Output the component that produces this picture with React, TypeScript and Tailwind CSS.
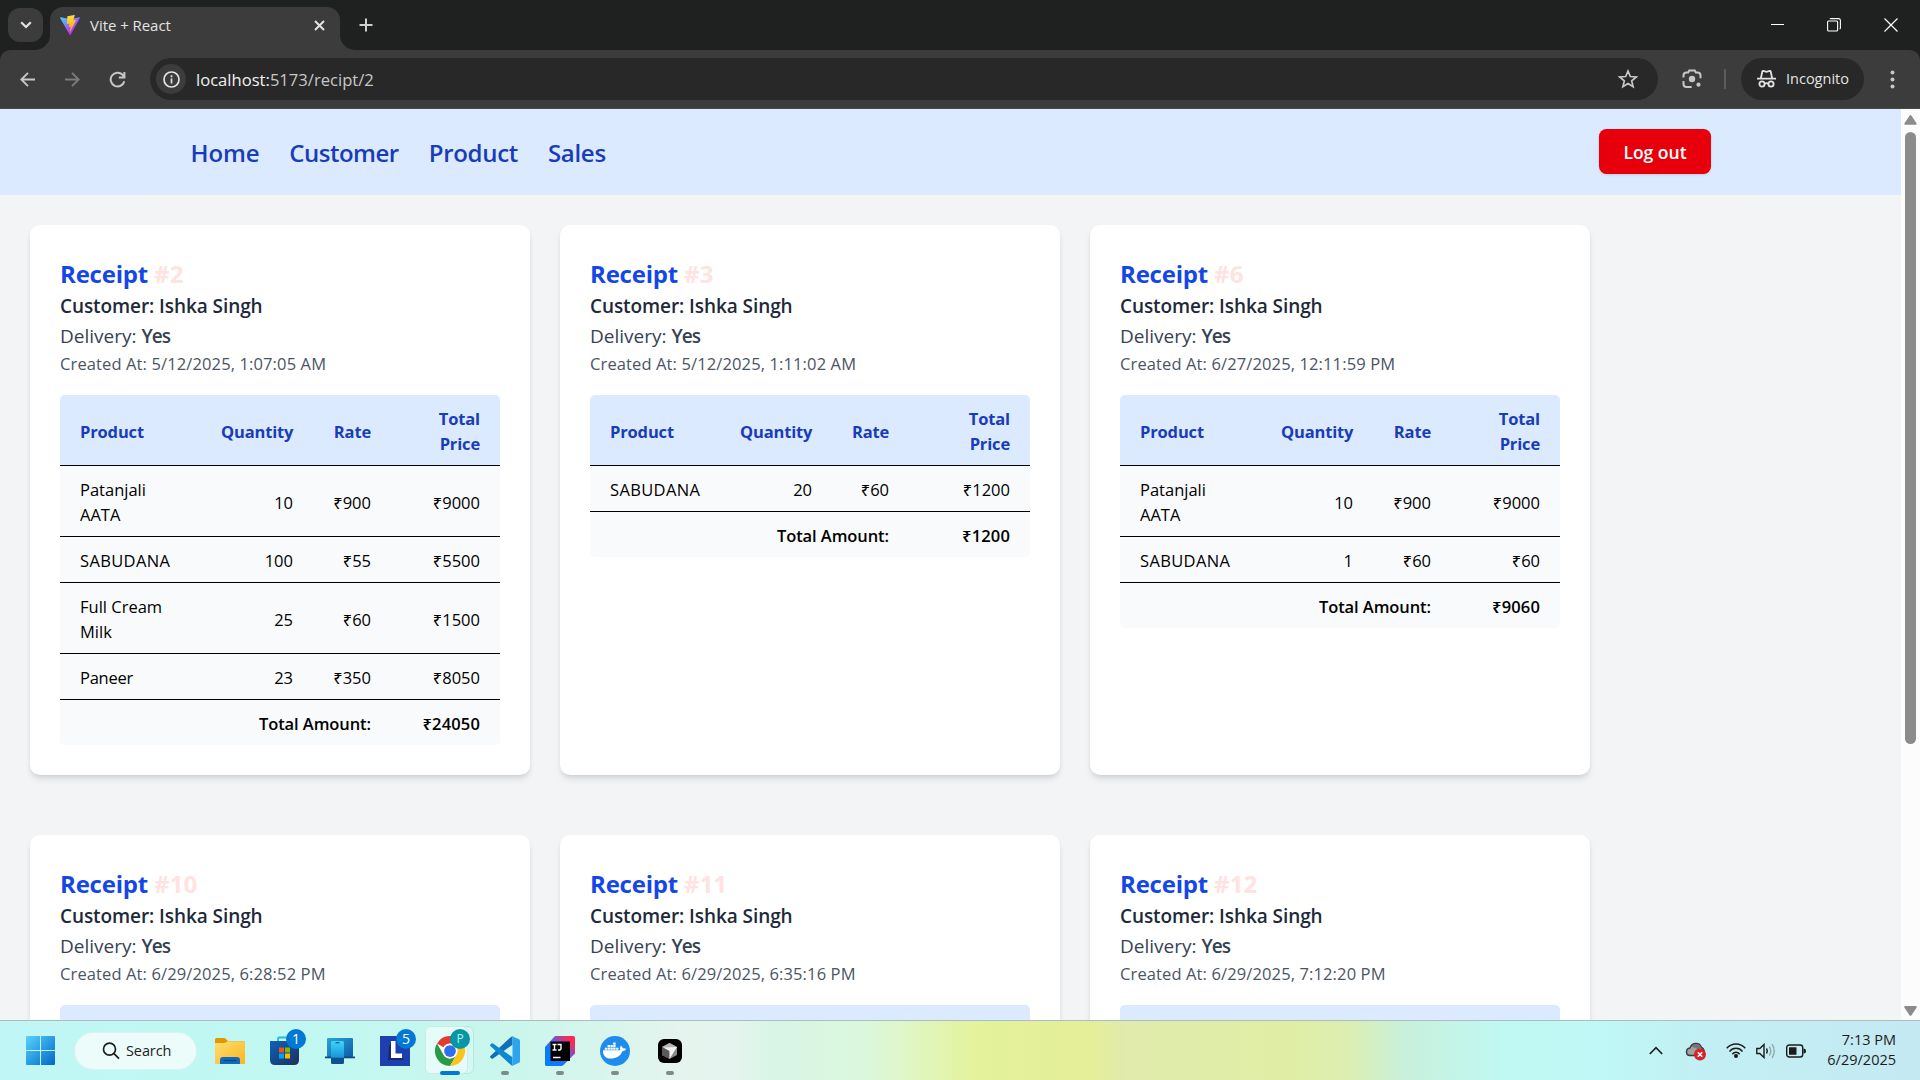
import React from "react";
import { FaDocker } from "react-icons/fa";

type Item = { name: React.ReactNode; qty: string; rate: string; total: string };
type Receipt = {
  id: number;
  created: string;
  items: Item[];
  total: string;
  cols: [string, string, string, string];
};

const COLS_A: [string, string, string, string] = ["w-[141px]", "w-[112px]", "w-[78px]", "w-[109px]"];
const COLS_B: [string, string, string, string] = ["w-[130px]", "w-[112px]", "w-[77px]", "w-[121px]"];

const aata = (
  <>
    Patanjali
    <br />
    AATA
  </>
);
const milk = (
  <>
    Full Cream
    <br />
    Milk
  </>
);
const sabudana = <span className="tracking-[0.35px]">SABUDANA</span>;

const receipts: Receipt[] = [
  {
    id: 2,
    created: "5/12/2025, 1:07:05 AM",
    items: [
      { name: aata, qty: "10", rate: "₹900", total: "₹9000" },
      { name: sabudana, qty: "100", rate: "₹55", total: "₹5500" },
      { name: milk, qty: "25", rate: "₹60", total: "₹1500" },
      { name: <span className="tracking-[-0.25px]">Paneer</span>, qty: "23", rate: "₹350", total: "₹8050" },
    ],
    total: "₹24050",
    cols: COLS_A,
  },
  {
    id: 3,
    created: "5/12/2025, 1:11:02 AM",
    items: [{ name: sabudana, qty: "20", rate: "₹60", total: "₹1200" }],
    total: "₹1200",
    cols: COLS_B,
  },
  {
    id: 6,
    created: "6/27/2025, 12:11:59 PM",
    items: [
      { name: aata, qty: "10", rate: "₹900", total: "₹9000" },
      { name: sabudana, qty: "1", rate: "₹60", total: "₹60" },
    ],
    total: "₹9060",
    cols: COLS_A,
  },
  { id: 10, created: "6/29/2025, 6:28:52 PM", items: [], total: "", cols: COLS_A },
  { id: 11, created: "6/29/2025, 6:35:16 PM", items: [], total: "", cols: COLS_A },
  { id: 12, created: "6/29/2025, 7:12:20 PM", items: [], total: "", cols: COLS_A },
];

function ViteLogo() {
  return (
    <svg width="20" height="20" viewBox="0 0 256 257">
      <defs>
        <linearGradient id="va" x1="0" x2="0.57" y1="0.08" y2="0.78">
          <stop offset="0" stopColor="#41D1FF" />
          <stop offset="1" stopColor="#BD34FE" />
        </linearGradient>
        <linearGradient id="vb" x1="0.43" x2="0.5" y1="0.02" y2="0.89">
          <stop offset="0" stopColor="#FFEA83" />
          <stop offset=".08" stopColor="#FFDD35" />
          <stop offset="1" stopColor="#FFA800" />
        </linearGradient>
      </defs>
      <path
        fill="url(#va)"
        d="M255.153 37.938 134.897 252.976c-2.483 4.44-8.862 4.466-11.382.048L.875 37.958c-2.746-4.814 1.371-10.646 6.827-9.67l120.385 21.517a6.537 6.537 0 0 0 2.322-.004l117.867-21.483c5.438-.991 9.574 4.796 6.877 9.62Z"
      />
      <path
        fill="url(#vb)"
        d="M185.432.063 96.44 17.501a3.268 3.268 0 0 0-2.634 3.014l-5.474 92.456a3.268 3.268 0 0 0 3.997 3.378l24.777-5.718c2.318-.535 4.413 1.507 3.936 3.838l-7.361 36.047c-.495 2.426 1.782 4.5 4.151 3.78l15.304-4.649c2.372-.72 4.652 1.36 4.15 3.788l-11.698 56.621c-.732 3.542 3.979 5.473 5.943 2.437l1.313-2.028 72.516-144.72c1.215-2.423-.88-5.186-3.54-4.672l-25.505 4.922c-2.396.462-4.435-1.77-3.759-4.114l16.646-57.705c.677-2.35-1.37-4.583-3.769-4.113Z"
      />
    </svg>
  );
}

function TabStrip() {
  return (
    <div className="flex h-[50px] bg-[#1f2120]">
      <div className="flex w-[50px] items-start justify-end pt-2 pr-[7px]">
        <div className="flex h-[34px] w-[35px] items-center justify-center rounded-xl bg-[#3c3c3c]">
          <svg width="12" height="8" viewBox="0 0 12 8" fill="none" stroke="#e3e3e3" strokeWidth="2.2">
            <path d="M1.2 1.2 6 6l4.8-4.8" />
          </svg>
        </div>
      </div>
      <div className="relative mt-[7px] flex h-[43px] w-[290px] items-start rounded-t-[13px] bg-[#3c3c3c]">
        <svg className="absolute bottom-0 -left-[15px]" width="15" height="15" fill="#3c3c3c">
          <path d="M15 0v15H0A15 15 0 0 0 15 0Z" />
        </svg>
        <svg className="absolute -right-[15px] bottom-0" width="15" height="15" fill="#3c3c3c">
          <path d="M0 0v15h15A15 15 0 0 1 0 0Z" />
        </svg>
        <div className="flex h-[36px] w-full items-center pl-[10px]">
          <ViteLogo />
          <span className="ml-[10px] text-[15px] leading-5 tracking-[-0.05px] text-[#e3e3e3]">Vite + React</span>
          <svg className="mr-[15px] ml-auto" width="11" height="11" viewBox="0 0 11 11" stroke="#e3e3e3" strokeWidth="2">
            <path d="m1 1 9 9M10 1l-9 9" />
          </svg>
        </div>
      </div>
      <svg className="mt-[18px] ml-[19px]" width="14" height="14" viewBox="0 0 14 14" stroke="#d0d0d0" strokeWidth="2">
        <path d="M7 .5v13M.5 7h13" />
      </svg>
      <div className="ml-auto flex h-[50px] items-center gap-[43px] pr-[22px]">
        <svg width="13" height="13" viewBox="0 0 13 13" stroke="#fff" strokeWidth="1">
          <path d="M0 5.5h13" />
        </svg>
        <svg width="14" height="14" viewBox="0 0 14 14" fill="none" stroke="#fff" strokeWidth="1.1">
          <rect x=".6" y="3" width="10" height="10" rx="1" />
          <path d="M3 1.2Q3.2.6 4 .6h7.5q1.900 0 1.900 1.900V10q0 .8-.8 1" />
        </svg>
        <svg width="14" height="14" viewBox="0 0 14 14" stroke="#fff" strokeWidth="1.2">
          <path d="m.5.5 13 13M13.5.5l-13 13" />
        </svg>
      </div>
    </div>
  );
}

function Toolbar() {
  return (
    <div className="bg-[#1f2120]">
      <div className="flex h-[59px] items-start rounded-t-[10px] border-b border-[#4a4a4a] bg-[#3c3c3c] pt-2">
        <div className="flex h-[42px] w-[150px] items-center pl-5">
          <svg width="15" height="15" viewBox="0 0 15 15" fill="none" stroke="#c7c7c7" strokeWidth="1.9">
            <path d="M15 7.5H1.5M8 .8 1.3 7.5 8 14.2" />
          </svg>
          <svg className="ml-[30px]" width="15" height="15" viewBox="0 0 15 15" fill="none" stroke="#7b7b7b" strokeWidth="1.9">
            <path d="M0 7.5h13.5M7 .8l6.7 6.7L7 14.2" />
          </svg>
          <svg className="ml-[29px]" width="17" height="17" viewBox="0 0 17 17" fill="none" stroke="#c7c7c7" strokeWidth="2">
            <path d="M15.3 10.2A6.900 6.900 0 1 1 13.600 3.800L15.300 5.800M15.400 1v5.500H9.800" />
          </svg>
        </div>
        <div className="flex h-[42px] w-[1508px] items-center rounded-full bg-[#282828] pr-[20px] pl-[6px]">
          <div className="flex h-[30px] w-[30px] items-center justify-center rounded-full bg-[#3c3c3c]">
            <svg width="17" height="17" viewBox="0 0 17 17" fill="none" stroke="#e3e3e3" strokeWidth="1.7">
              <circle cx="8.5" cy="8.5" r="7.5" />
              <path d="M8.5 7.5v5M8.5 4.3v1.900" />
            </svg>
          </div>
          <span className="ml-[10px] pt-px text-[16.6px] leading-6 text-[#c7c7c7]">
            <span className="text-[#f0f0f0]">localhost:</span>5173/recipt/2
          </span>
          <svg className="ml-auto" width="20" height="20" viewBox="0 0 20 20" fill="none" stroke="#c7c7c7" strokeWidth="1.7">
            <path d="m10 2 2.300 5.500 6 .5-4.600 3.900 1.400 5.800L10 14.600l-5.100 3.100 1.400-5.800L1.700 8l6-.5Z" />
          </svg>
        </div>
        <div className="flex h-[42px] flex-1 items-center">
          <svg className="ml-[24px]" width="20" height="20" viewBox="0 0 20 20" fill="none" stroke="#c7c7c7" strokeWidth="2">
            <path d="M1.500 8.500V6.500q0-3 3-3h1.700l1-2h5.600l1 2h1.700q3 0 3 3v2.700M1.500 12v3q0 3 3 3h5.200" />
            <circle cx="10" cy="10" r="3.200" fill="#c7c7c7" stroke="none" />
            <circle cx="16.500" cy="15.700" r="2.100" fill="#c7c7c7" stroke="none" />
          </svg>
          <div className="ml-[22px] h-5 w-[2px] bg-[#5c5c5c]" />
          <div className="ml-[15px] flex h-[42px] w-[123px] items-center rounded-full bg-[#282828] pl-4">
            <svg width="19" height="18" viewBox="0 0 19 18" fill="none" stroke="#e3e3e3" strokeWidth="1.8">
              <path d="M0 8.700h19M3.800 8.500 5.300 1.500Q5.500.9 6.200 1l3.300.9 3.300-.9q.7-.1.900.500l1.500 7" />
              <circle cx="5" cy="14" r="2.600" />
              <circle cx="14" cy="14" r="2.600" />
              <path d="M7.600 13.700q1.900-1 3.800 0" />
            </svg>
            <span className="ml-[10px] text-[14.5px] leading-5 text-[#e3e3e3]">Incognito</span>
          </div>
          <svg className="ml-[26px]" width="5" height="19" viewBox="0 0 5 19" fill="#c7c7c7">
            <circle cx="2.500" cy="2.500" r="2" />
            <circle cx="2.500" cy="9.500" r="2" />
            <circle cx="2.500" cy="16.500" r="2" />
          </svg>
        </div>
      </div>
    </div>
  );
}

function Navbar() {
  return (
    <nav className="flex h-[86px] justify-center bg-blue-100">
      <div className="flex w-[1600px] items-center justify-between border-b border-gray-200 px-10">
        <div className="flex gap-[30px] pt-[2px] text-[24px] leading-[35px] font-semibold text-blue-800">
          <a className="tracking-[-0.15px]">Home</a>
          <a className="tracking-[-0.5px]">Customer</a>
          <a className="tracking-[-0.3px]">Product</a>
          <a className="tracking-[-0.3px]">Sales</a>
        </div>
        <button className="h-[45px] w-[112px] rounded-[7.5px] bg-[#e7000b] pt-[2px] pl-px text-[17.5px] font-semibold text-white shadow">
          Log out
        </button>
      </div>
    </nav>
  );
}

const CELL = "px-5 pt-[11px] pb-[9px]";

function ReceiptTable({ r }: { r: Receipt }) {
  const line = "border-b border-black";
  if (r.items.length === 0) {
    return <div className="mt-[19px] h-[70px] rounded-t-[5px] bg-blue-100" />;
  }
  return (
    <div className="mt-[19px] overflow-hidden rounded-[5px] bg-gray-50">
      <table className="w-[440px] table-fixed border-separate border-spacing-0 text-[16.5px] leading-[25px] text-black">
        <colgroup>
          {r.cols.map((c, i) => (
            <col key={i} className={c} />
          ))}
        </colgroup>
        <thead>
          <tr className="bg-blue-100 font-bold tracking-[-0.15px] text-blue-800">
            <th className={`${CELL} ${line} text-left`}>Product</th>
            <th className={`${CELL} ${line} text-right`}>Quantity</th>
            <th className={`${CELL} ${line} text-right`}>Rate</th>
            <th className={`${CELL} ${line} text-right`}>
              Total
              <br />
              Price
            </th>
          </tr>
        </thead>
        <tbody>
          {r.items.map((it, i) => (
            <tr key={i}>
              <td className={`${CELL} ${line}`}>{it.name}</td>
              <td className={`${CELL} ${line} text-right`}>{it.qty}</td>
              <td className={`${CELL} ${line} text-right`}>{it.rate}</td>
              <td className={`${CELL} ${line} text-right`}>{it.total}</td>
            </tr>
          ))}
          <tr className="font-semibold">
            <td colSpan={3} className={`${CELL} text-right tracking-[-0.08px]`}>
              Total Amount:
            </td>
            <td className={`${CELL} text-right tracking-[0.15px]`}>{r.total}</td>
          </tr>
        </tbody>
      </table>
    </div>
  );
}

function ReceiptCard({ r }: { r: Receipt }) {
  return (
    <div className="rounded-[10px] bg-white px-[30px] pt-[31px] pb-[30px] shadow-[0_5px_7.5px_-1px_rgb(0_0_0/0.1),0_2.5px_5px_-2.5px_rgb(0_0_0/0.1)]">
      <h2 className="text-[24px] leading-[35px] font-bold tracking-[-0.2px] text-[#1447e6]">
        Receipt <span className="tracking-[0.1px] text-[#ffe2e2]">#{r.id}</span>
      </h2>
      <p className="text-[19px] leading-[30px] font-semibold tracking-[-0.08px] text-gray-800">Customer: Ishka Singh</p>
      <p className="text-[19px] leading-[30px] text-gray-700">
        Delivery: <span className="font-semibold tracking-[-0.9px]">Yes</span>
      </p>
      <p className="text-[16.5px] leading-[25px] tracking-[0.12px] text-gray-600">Created At: {r.created}</p>
      <ReceiptTable r={r} />
    </div>
  );
}

function Scrollbar() {
  return (
    <div className="flex w-[19px] flex-col items-center bg-[#fcfcfc] pt-[6px] pb-[4px]">
      <svg width="13" height="10" viewBox="0 0 13 10" fill="#8b8b8b">
        <path d="M5.5.7q1-1.200 2 0l5 7.500q.7 1.500-.8 1.600H1.300Q-.2 9.700.5 8.200Z" />
      </svg>
      <div className="mt-[7px] h-[612px] w-[11px] rounded-full bg-[#8b8b8b]" />
      <svg className="mt-auto" width="13" height="10" viewBox="0 0 13 10" fill="#8b8b8b">
        <path d="M5.5 9.200q1 1.200 2 0l5-7.500q.7-1.500-.8-1.600H1.300Q-.2.2.5 1.700Z" />
      </svg>
    </div>
  );
}

function Slot({ children, running }: { children: React.ReactNode; running?: boolean }) {
  return (
    <div className="relative flex h-[60px] w-[55px] items-center justify-center">
      {children}
      {running && <div className="absolute bottom-[6px] left-[24px] h-1 w-2 rounded-full bg-[#7f8b89]" />}
    </div>
  );
}

function CountBadge({ children }: { children: React.ReactNode }) {
  return (
    <div className="absolute top-[8px] left-[29px] flex h-5 w-5 items-center justify-center rounded-full bg-[#0078d4] text-[14px] leading-5 text-white">
      {children}
    </div>
  );
}

function Taskbar() {
  return (
    <div className="flex h-[60px] items-center border-t border-[#a9bfbc] bg-[linear-gradient(90deg,#c0f6f5_0px,#c1f8f1_330px,#cbf6ec_520px,#e6f4ee_690px,#e6f4f0_725px,#d9f5e6_775px,#dbf8dd_865px,#dff6c4_910px,#e4f29c_975px,#e5ee98_1090px,#e0ebac_1125px,#e0eea4_1290px,#dbeeb2_1350px,#c8f0dc_1405px,#c0f8f2_1500px,#bff8f6_1600px,#c2eff3_1700px,#c5e9f3_1920px)]">
      <svg className="ml-[26px]" width="29" height="29" viewBox="0 0 29 29">
        <defs>
          <linearGradient id="win" x1="0" y1="0" x2="1" y2="1">
            <stop offset="0" stopColor="#56d4fc" />
            <stop offset="1" stopColor="#0067c8" />
          </linearGradient>
        </defs>
        <path fill="url(#win)" d="M1 0h13v14H0V1Q0 0 1 0ZM15 0h13q1 0 1 1v13H15ZM0 15h14v14H1q-1 0-1-1ZM15 15h14v13q0 1-1 1H15Z" />
      </svg>
      <div className="ml-[19px] flex h-[38px] w-[123px] items-center rounded-full border border-[#d8f3f1] bg-[#ecfcfb] pl-[27px]">
        <svg width="18" height="18" viewBox="0 0 18 18" fill="none" stroke="#1c1c1c" strokeWidth="1.7">
          <circle cx="7.500" cy="7.200" r="6" />
          <path d="m12 11.600 5 5" />
        </svg>
        <span className="ml-[6px] text-[14.5px] leading-5 tracking-[-0.1px] text-[#222]">Search</span>
      </div>
      <div className="ml-[5px] flex">
        <Slot>
          <svg width="30" height="28" viewBox="0 0 30 28">
            <defs>
              <linearGradient id="fold" x1="0" y1="0" x2="1" y2="1">
                <stop offset="0" stopColor="#ffdc73" />
                <stop offset="1" stopColor="#f9b81d" />
              </linearGradient>
            </defs>
            <path fill="#dd9a00" d="M0 2.500Q0 1 1.500 1H9q1 0 2 1l2 2h15q2 0 2 2v4H0Z" />
            <path fill="url(#fold)" d="M0 6h9q1.500 0 2.500-1l.8-.8H30V27H0Z" />
            <path fill="#0f6cbd" d="M5 27v-4q0-3 3-3h14q3 0 3 3v4Z" />
            <path stroke="#0a4680" strokeWidth="1.3" d="M8.500 23.500h13" />
          </svg>
        </Slot>
        <Slot>
          <svg width="29" height="30" viewBox="0 0 29 30">
            <defs>
              <linearGradient id="store" x1="0" y1="0" x2="1" y2="1">
                <stop offset="0" stopColor="#0a63b8" />
                <stop offset="1" stopColor="#1f2f5c" />
              </linearGradient>
            </defs>
            <path fill="none" stroke="#25b7ea" strokeWidth="1.8" d="M8 6V2.500Q8 1.500 9 1.500h11q1 0 1 1V6" />
            <path fill="url(#store)" d="M0 5h29v19q0 5-5 5H5q-5 0-5-5Z" />
            <path fill="#f25022" d="M9 11.500h5v5H9Z" />
            <path fill="#7fba00" d="M15 11.500h5v5h-5Z" />
            <path fill="#00a4ef" d="M9 17.500h5v5H9Z" />
            <path fill="#ffb900" d="M15 17.500h5v5h-5Z" />
          </svg>
          <CountBadge>1</CountBadge>
        </Slot>
        <Slot>
          <svg width="30" height="27" viewBox="0 0 30 27">
            <defs>
              <linearGradient id="pc" x1="0" y1="0" x2="1" y2="1">
                <stop offset="0" stopColor="#2ba3dc" />
                <stop offset="1" stopColor="#0c5ca8" />
              </linearGradient>
              <linearGradient id="ph" x1="0" y1="0" x2="0" y2="1">
                <stop offset="0" stopColor="#3ed6f7" />
                <stop offset=".7" stopColor="#1a98dc" />
                <stop offset=".75" stopColor="#0c5290" />
              </linearGradient>
            </defs>
            <rect x="2" y="1" width="26" height="19" rx="1" fill="url(#pc)" />
            <path fill="#0d4b80" d="M0 19.500h30v1.800H0Z" />
            <rect x="6" y="4" width="13" height="23" rx="1.500" fill="url(#ph)" />
            <path stroke="#0e5d95" strokeWidth="1.2" d="M10.500 5.700h4" />
          </svg>
        </Slot>
        <Slot>
          <div className="flex h-[30px] w-[30px] items-center justify-center bg-[#1e3fae]">
            <svg width="20" height="20" viewBox="0 0 20 20">
              <path fill="#142a73" d="M4 5 6 2v13l13 3-1 1H3Z" />
              <path fill="#fff" d="M6 0h4.500v12.500H17V17H6Z" />
            </svg>
          </div>
          <CountBadge>5</CountBadge>
        </Slot>
        <Slot>
          <div className="absolute top-[5px] left-[6px] h-12 w-[46px] rounded-md border border-[#b9e6df] bg-[#d2f9f3]" />
          <div className="absolute top-[5px] left-[3px] h-12 w-[43px] rounded-md border border-[#cdebe6] bg-[#e6fcf8]" />
          <svg className="relative" width="30" height="30" viewBox="0 0 48 48">
            <circle cx="24" cy="24" r="24" fill="#fff" />
            <path fill="#e33b2e" d="M3.200 12A24 24 0 0 1 44.800 12H24a12 12 0 0 0-10.400 6Z" />
            <path fill="#2b9a47" d="M3.200 12 13.600 30A12 12 0 0 0 34.400 30L24 48A24 24 0 0 1 3.200 12Z" />
            <path fill="#fcc31e" d="M44.800 12A24 24 0 0 1 24 48L34.400 30A12 12 0 0 0 24 12Z" />
            <circle cx="24" cy="24" r="11.800" fill="#fff" />
            <circle cx="24" cy="24" r="9.400" fill="#2f6fea" />
          </svg>
          <div className="absolute top-[8px] left-[28px] flex h-5 w-5 items-center justify-center rounded-full bg-[#0597a5] text-[12px] leading-5 text-[#c5eef0]">
            P
          </div>
          <div className="absolute bottom-[6px] left-[18px] h-1 w-5 rounded-full bg-[#0078d4]" />
        </Slot>
        <Slot running>
          <svg width="30" height="30" viewBox="0 0 100 100">
            <path fill="#1070b3" d="M75 1v28L10 75q-2.500 1.800-5 0L1.300 71.500q-2.500-2.500 0-5.200L68 5Z" />
            <path fill="#0e88d3" d="M75 99V71L10 25q-2.500-1.800-5 0L1.300 28.500q-2.500 2.500 0 5.200L68 95Z" />
            <path fill="#2ca5ee" d="M73 100q-3-.5-5-3 5 3 7-2V5q-2-5-7-2 2.500-3 6-2.500L97 11q3 2 3 5v68q0 4-3 5.500Z" />
          </svg>
        </Slot>
        <Slot running>
          <svg width="30" height="30" viewBox="0 0 30 30">
            <defs>
              <linearGradient id="ij" x1="0" y1="1" x2="1" y2="0">
                <stop offset=".3" stopColor="#087cfa" />
                <stop offset=".58" stopColor="#6b57d8" />
                <stop offset=".85" stopColor="#fe2857" />
              </linearGradient>
            </defs>
            <path fill="url(#ij)" d="M10 0h18.500Q30 0 30 1.500V17.500L18.500 29q-1 1-2.500 1H1.500Q0 30 0 28.500V11Z" />
            <path fill="#000" d="M5.500 5.500h19.500v19.500H5.500Z" />
            <path
              fill="none"
              stroke="#fff"
              strokeWidth="1.4"
              d="M7.500 8.500h4M9.500 8.500v5M7.500 14h4M12.500 8.500h3.500v4q0 1.500-1.500 1.500h-1.500M8 21.500h7.500"
            />
          </svg>
        </Slot>
        <Slot running>
          <div className="flex h-[30px] w-[30px] items-center justify-center rounded-full bg-[#1d8cec]">
            <FaDocker size={23} color="#fff" />
          </div>
        </Slot>
        <Slot running>
          <div className="flex h-6 w-6 items-center justify-center rounded-md bg-black">
            <svg width="15" height="16" viewBox="0 0 15 16">
              <path fill="#8a8a8a" d="M7.500 0 15 4v8l-7.500 4L0 12V4Z" />
              <path fill="#b5b5b5" d="M0 4 7.500 0 15 4 7.500 8Z" />
              <path fill="#5a5a5a" d="M0 4v8l7.500 4V8Z" />
              <path fill="#f0f0f0" d="M15 4 7.500 16V8L1.500 4.500Z" />
            </svg>
          </div>
        </Slot>
      </div>
      <div className="ml-auto flex items-center pr-6">
        <svg width="14" height="9" viewBox="0 0 14 9" fill="none" stroke="#1c1c1c" strokeWidth="1.6">
          <path d="m.8 8 6.200-6.300L13.200 8" />
        </svg>
        <svg className="ml-[22px]" width="22" height="20" viewBox="0 0 22 20">
          <path
            fill="#a2a2a4"
            stroke="#3a3a3a"
            strokeWidth="1.4"
            d="M5 14.500Q1.500 14.500 1.500 11T5 7q1.500-4.500 6-4.500 4 0 5.500 4 2 .8 2.500 3v5Z"
          />
          <path fill="#77777a" d="M6 6q2-3 5.500-3T16 7l-3 2Q10 5.500 6 6Z" />
          <circle cx="15" cy="13.500" r="6" fill="#dc2028" />
          <path stroke="#fff" strokeWidth="1.6" d="m12.800 11.300 4.400 4.400M17.200 11.300l-4.400 4.400" />
        </svg>
        <svg className="ml-[19px]" width="20" height="15" viewBox="0 0 20 15" fill="none" stroke="#1c1c1c" strokeWidth="1.4">
          <path d="M.7 5.300Q4.500 1 10 1t9.300 4.300M3.500 8.500Q6 5.300 10 5.300t6.500 3.200M6.300 11.200Q7.800 9.300 10 9.300t3.700 1.900" />
          <circle cx="10" cy="12.900" r="1.300" fill="#1c1c1c" />
        </svg>
        <svg className="ml-[10px]" width="20" height="16" viewBox="0 0 20 16" fill="none" stroke="#1c1c1c" strokeWidth="1.4">
          <path d="M.8 5.500h3L8 1.500v13l-4.200-4h-3Z" />
          <path d="M10.500 5.500q1.600 2.500 0 5" />
          <path stroke="#8fa9ae" d="M13.300 3.500q3 4.500 0 9M16 1.200q4.500 6.800 0 13.600" />
        </svg>
        <svg className="ml-[10px]" width="20" height="14" viewBox="0 0 20 14">
          <rect x=".7" y="1" width="16" height="12" rx="2.500" fill="none" stroke="#1c1c1c" strokeWidth="1.4" />
          <rect x="3" y="3.300" width="7.500" height="7.400" rx=".5" fill="#1c1c1c" />
          <path fill="#1c1c1c" d="M17.500 4.500q2.500 0 2.500 2.500t-2.500 2.500Z" />
        </svg>
        <div className="w-[90px] pb-[2px] text-right text-[14.5px] leading-5 text-[#1c1c1c]">
          <div>7:13 PM</div>
          <div>6/29/2025</div>
        </div>
      </div>
    </div>
  );
}

export default function App() {
  return (
    <div className="flex h-[1080px] w-[1920px] flex-col overflow-hidden font-['Open_Sans','Noto_Sans',sans-serif]">
      <TabStrip />
      <Toolbar />
      <div className="flex h-[911px] overflow-hidden">
        <div className="h-full w-[1901px] overflow-hidden bg-gray-100">
          <Navbar />
          <div className="grid grid-cols-[repeat(3,500px)] gap-x-[30px] gap-y-[60px] p-[30px]">
            {receipts.map((r) => (
              <ReceiptCard key={r.id} r={r} />
            ))}
          </div>
        </div>
        <Scrollbar />
      </div>
      <Taskbar />
    </div>
  );
}
